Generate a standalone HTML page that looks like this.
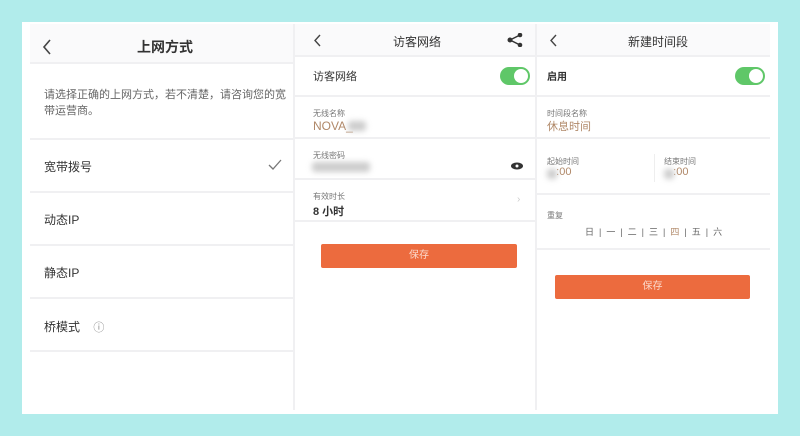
<!DOCTYPE html><html><head><meta charset="utf-8"><style>
body{margin:0;width:800px;height:436px;background:#b1eceb;position:relative;overflow:hidden;font-family:"Liberation Sans","Noto Sans CJK SC",sans-serif;color:#333}
.card{position:absolute;left:22px;top:22px;width:756px;height:392px;background:#fff}
.p{position:absolute;top:24px;height:386px;background:#fff}
.r{position:absolute;left:0;right:0;background:#fff;border-top:2px solid #f0f0f2}
.t{position:absolute;font-size:13px;white-space:nowrap}
.s{font-size:8px;color:#777}
.sw{position:absolute;width:30px;height:18px;border-radius:9px;background:#5fc768}
.sw:after{content:"";position:absolute;right:2px;top:2px;width:14px;height:14px;border-radius:7px;background:#fff}
.btn{position:absolute;background:#ec6b3e;color:#fbd9cc;font-size:10px;text-align:center;border-radius:2px}
.bl{position:absolute;filter:blur(3px);background:#ccc;border-radius:3px}
.vl{position:absolute;top:24px;width:2px;height:386px;background:#f0f0f2}
</style></head><body>
<div class="card"></div>
<div class="vl" style="left:293px"></div><div class="vl" style="left:535px"></div>
<!-- panel1 -->
<div class="p" style="left:30px;width:263px">
 <div class="r" style="top:0;height:38px;background:#fafafb;border:0"></div>
 <svg style="position:absolute;left:12px;top:15px" width="10" height="16"><polyline points="8,1 2,8 8,15" fill="none" stroke="#444" stroke-width="1.6"/></svg>
 <div class="t" style="left:107px;top:13px;font-size:14px;font-weight:bold">上网方式</div>
 <div class="r" style="top:38px;height:74px"></div>
 <div class="t" style="left:14px;top:63px;font-size:11px;color:#666;line-height:16px">请选择正确的上网方式，若不清楚，请咨询您的宽<br>带运营商。</div>
 <div class="r" style="top:114px;height:50px"></div><div class="t" style="left:14px;top:134px;font-size:12px">宽带拨号</div>
 <svg style="position:absolute;left:238px;top:135px" width="14" height="11"><polyline points="1,6 5,10 13,1" fill="none" stroke="#777" stroke-width="1.3"/></svg>
 <div class="r" style="top:167px;height:50px"></div><div class="t" style="left:14px;top:187px;font-size:12px">动态IP</div>
 <div class="r" style="top:220px;height:50px"></div><div class="t" style="left:14px;top:240px;font-size:12px">静态IP</div>
 <div class="r" style="top:273px;height:51px;border-bottom:2px solid #f0f0f2"></div><div class="t" style="left:14px;top:294px;font-size:12px">桥模式 &nbsp;&nbsp;&nbsp;<span style="color:#888;font-size:11px">ⓘ</span></div>
</div>
<!-- panel2 -->
<div class="p" style="left:295px;width:240px">
 <div class="r" style="top:0;height:31px;background:#fafafb;border:0"></div>
 <svg style="position:absolute;left:18px;top:10px" width="8" height="13"><polyline points="7,1 2,6.5 7,12" fill="none" stroke="#444" stroke-width="1.4"/></svg>
 <div class="t" style="left:98px;top:9px;font-size:12px">访客网络</div>
 <svg style="position:absolute;left:212px;top:9px" width="16" height="14"><line x1="3" y1="7" x2="13" y2="2" stroke="#333" stroke-width="1.5"/><line x1="3" y1="7" x2="13" y2="12" stroke="#333" stroke-width="1.5"/><circle cx="3" cy="7" r="2.5" fill="#333"/><circle cx="13" cy="2" r="2.3" fill="#333"/><circle cx="13" cy="12" r="2.3" fill="#333"/></svg>
 <div class="r" style="top:31px;height:38px"></div><div class="t" style="left:18px;top:44px;font-size:11px">访客网络</div><div class="sw" style="left:205px;top:43px"></div>
 <div class="r" style="top:71px;height:40px"></div><div class="t s" style="left:18px;top:84px">无线名称</div><div class="t" style="left:18px;top:95px;color:#b08868;font-size:12px">NOVA_</div><div class="bl" style="left:53px;top:97px;width:18px;height:10px"></div>
 <div class="r" style="top:113px;height:39px"></div><div class="t s" style="left:18px;top:126px">无线密码</div><div class="bl" style="left:17px;top:138px;width:58px;height:10px"></div>
 <svg style="position:absolute;left:216px;top:138px" width="12" height="8"><ellipse cx="6" cy="4" rx="6" ry="3.5" fill="#333"/><circle cx="6" cy="4" r="1.5" fill="#fff"/></svg>
 <div class="r" style="top:154px;height:40px;border-bottom:2px solid #f0f0f2"></div><div class="t s" style="left:18px;top:167px">有效时长</div><div class="t" style="left:18px;top:179px;font-size:11px;font-weight:bold">8 小时</div><div class="t" style="left:222px;top:170px;color:#ccc;font-size:10px">›</div>
 <div class="btn" style="left:26px;top:220px;width:196px;height:24px;line-height:24px">保存</div>
</div>
<!-- panel3 -->
<div class="p" style="left:537px;width:233px">
 <div class="r" style="top:0;height:31px;background:#fafafb;border:0"></div>
 <svg style="position:absolute;left:12px;top:10px" width="8" height="13"><polyline points="7,1 2,6.5 7,12" fill="none" stroke="#444" stroke-width="1.4"/></svg>
 <div class="t" style="left:91px;top:9px;font-size:12px">新建时间段</div>
 <div class="r" style="top:31px;height:38px"></div><div class="t" style="left:10px;top:44px;font-size:10px;font-weight:bold">启用</div><div class="sw" style="left:198px;top:43px"></div>
 <div class="r" style="top:71px;height:40px"></div><div class="t s" style="left:10px;top:84px">时间段名称</div><div class="t" style="left:10px;top:94px;color:#b08868;font-size:11px">休息时间</div>
 <div class="r" style="top:113px;height:54px"></div><div class="t s" style="left:10px;top:132px">起始时间</div><div class="t" style="left:10px;top:142px;color:#b08868;font-size:11px">&nbsp;&nbsp;&nbsp;:00</div><div class="bl" style="left:10px;top:145px;width:10px;height:10px"></div>
 <div style="position:absolute;left:117px;top:130px;width:1px;height:28px;background:#eee"></div>
 <div class="t s" style="left:127px;top:132px">结束时间</div><div class="t" style="left:127px;top:142px;color:#b08868;font-size:11px">&nbsp;&nbsp;&nbsp;:00</div><div class="bl" style="left:127px;top:145px;width:10px;height:10px"></div>
 <div class="r" style="top:169px;height:53px;border-bottom:2px solid #f0f0f2"></div><div class="t s" style="left:10px;top:186px">重复</div>
 <div class="t" style="left:48px;top:201px;font-size:9px;color:#666">日 &nbsp;|&nbsp; 一 &nbsp;|&nbsp; 二 &nbsp;|&nbsp; 三 &nbsp;|&nbsp; <span style="color:#b08868">四</span> &nbsp;|&nbsp; 五 &nbsp;|&nbsp; 六</div>
 <div class="btn" style="left:18px;top:251px;width:195px;height:24px;line-height:24px">保存</div>
</div>
</body></html>
